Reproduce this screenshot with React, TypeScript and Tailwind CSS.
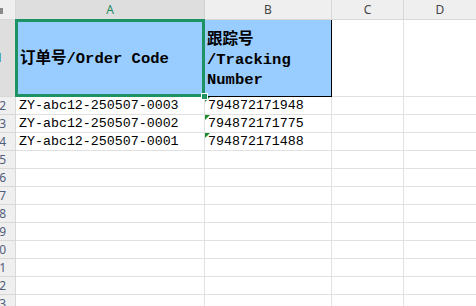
import React from 'react';

const cellFont = { fontFamily: "'Liberation Mono', 'Noto Sans CJK SC', monospace" };

const rows = [
  { n: 2, a: 'ZY-abc12-250507-0003', b: '794872171948' },
  { n: 3, a: 'ZY-abc12-250507-0002', b: '794872171775' },
  { n: 4, a: 'ZY-abc12-250507-0001', b: '794872171488' },
];

const emptyRows = [5, 6, 7, 8, 9, 10, 11, 12, 13];

const RowHead = ({ n, active }: { n: number; active?: boolean }) => (
  <div
    className={`w-[16px] shrink-0 overflow-hidden border-r border-b border-[#d8d8d8] flex items-center ${
      active ? 'bg-[#dedede]' : 'bg-[#efefef]'
    }`}
  >
    <div
      className={`flex justify-end text-[12px] whitespace-nowrap ${active ? 'w-[3px] text-[#1d8a5e]' : 'w-[6px] text-[#4f5d7c]'}`}
      style={{ fontFamily: "'Noto Sans', sans-serif" }}
    >
      {n}
    </div>
  </div>
);

const Tri = () => (
  <div className="absolute left-0 top-0 w-0 h-0 border-t-[5px] border-r-[5px] border-t-[#1f8a2e] border-r-transparent" />
);

const App: React.FC = () => {
  return (
    <div className="w-[476px] h-[306px] overflow-hidden bg-white flex flex-col text-black">
      {/* Column headers */}
      <div className="flex h-[20px] shrink-0" style={{ fontFamily: "'Noto Sans', sans-serif" }}>
        <div className="w-[16px] shrink-0 bg-[#efefef] border-r border-b border-[#d8d8d8] relative">
          <div className="absolute left-0 top-[8px] w-[3px] h-[6px] bg-[#8a8a8a]" />
        </div>
        <div className="w-[189px] shrink-0 bg-[#dedede] border-r border-b border-[#d0d0d0] flex items-center justify-center text-[12px] text-[#1d8a5e]">A</div>
        <div className="w-[127px] shrink-0 bg-[#efefef] border-r border-b border-[#d8d8d8] flex items-center justify-center text-[12px] text-[#444]">B</div>
        <div className="w-[72px] shrink-0 bg-[#efefef] border-r border-b border-[#d8d8d8] flex items-center justify-center text-[12px] text-[#444]">C</div>
        <div className="w-[72px] shrink-0 bg-[#efefef] border-b border-[#d8d8d8] flex items-center justify-center text-[12px] text-[#444]">D</div>
      </div>

      {/* Row 1 */}
      <div className="flex h-[77px] shrink-0">
        <RowHead n={1} active />
        <div className="w-[189px] shrink-0 bg-[#99ccff] border-r border-b border-black relative flex items-center pl-[4px] pt-[4px]">
          <span className="text-[15.5px] font-bold whitespace-nowrap" style={cellFont}>订单号/Order Code</span>
          {/* selection */}
          <div className="absolute left-[-1px] top-[-1px] w-[190px] h-[78px] border-[3px] border-[#1d9263]" />
          <div className="absolute right-[-4px] bottom-[-4px] w-[7px] h-[7px] bg-[#1d9263] border border-white z-10" />
        </div>
        <div className="w-[127px] shrink-0 bg-[#99ccff] border-r border-b border-black flex items-center pl-[2px] pt-[4px]">
          <span className="text-[15.5px] font-bold leading-[20px]" style={cellFont}>
            跟踪号<br />/Tracking<br />Number
          </span>
        </div>
        <div className="w-[72px] shrink-0 border-r border-b border-[#e1e1e1]" />
        <div className="w-[72px] shrink-0 border-b border-[#e1e1e1]" />
      </div>

      {rows.map((r) => (
        <div key={r.n} className="flex h-[18px] shrink-0">
          <RowHead n={r.n} />
          <div className="w-[189px] shrink-0 border-r border-b border-[#e1e1e1] flex items-center pl-[3px] text-[13.3px] whitespace-nowrap" style={cellFont}>
            {r.a}
          </div>
          <div className="w-[127px] shrink-0 border-r border-b border-[#e1e1e1] flex items-center pl-[3px] text-[13.3px] relative" style={cellFont}>
            <Tri />
            {r.b}
          </div>
          <div className="w-[72px] shrink-0 border-r border-b border-[#e1e1e1]" />
          <div className="w-[72px] shrink-0 border-b border-[#e1e1e1]" />
        </div>
      ))}

      {emptyRows.map((n) => (
        <div key={n} className="flex h-[18px] shrink-0">
          <RowHead n={n} />
          <div className="w-[189px] shrink-0 border-r border-b border-[#e1e1e1]" />
          <div className="w-[127px] shrink-0 border-r border-b border-[#e1e1e1]" />
          <div className="w-[72px] shrink-0 border-r border-b border-[#e1e1e1]" />
          <div className="w-[72px] shrink-0 border-b border-[#e1e1e1]" />
        </div>
      ))}
    </div>
  );
};

export default App;
